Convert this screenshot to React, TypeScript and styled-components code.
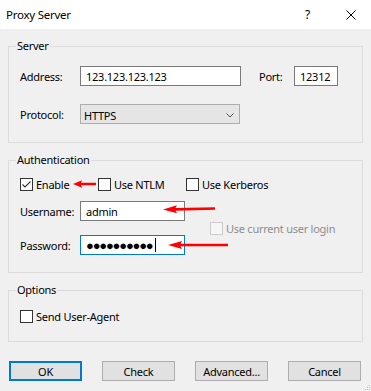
import React from 'react';
import styled, { createGlobalStyle } from 'styled-components';

const GlobalStyle = createGlobalStyle`
    html, body {
        margin: 0;
        padding: 0;
        background: #f0f0f0;
    }
    * {
        box-sizing: border-box;
    }
`

const Window = styled.div`
    position: relative;
    width: 371px;
    height: 391px;
    background: #f0f0f0;
    font-family: "Noto Sans", "Open Sans", sans-serif;
    font-size: 11px;
    letter-spacing: -0.25px;
    color: #000;
    overflow: hidden;
    display: flex;
    flex-direction: column;
`

const TitleBar = styled.div`
    height: 29px;
    background: #fff;
    display: flex;
    align-items: center;
    padding: 0 15px 0 6px;
`

const TitleText = styled.span`
    flex: 1;
    font-size: 11.5px;
`

const HelpGlyph = styled.span`
    font-size: 12px;
    margin-right: 36px;
`

const Body = styled.div`
    display: flex;
    flex-direction: column;
    gap: 9px;
    padding: 9px 8px 0 8px;
`

const Group = styled.fieldset<{ $pad: string }>`
    margin: 0;
    min-width: 0;
    border: 1px solid #dcdcdc;
    padding: ${p => p.$pad};
    display: flex;
    flex-direction: column;
`

const Legend = styled.legend`
    margin-left: -4px;
    padding: 0 1px;
    line-height: 16px;
`

const Row = styled.div<{ $gap?: number }>`
    position: relative;
    display: flex;
    align-items: center;
    margin-top: ${p => p.$gap ?? 0}px;
`

const Label = styled.span<{ $w: number }>`
    width: ${p => p.$w}px;
    flex-shrink: 0;
`

const TextBox = styled.div<{ $w: number; $focused?: boolean }>`
    width: ${p => p.$w}px;
    height: 20px;
    background: #fff;
    border: 1px solid ${p => (p.$focused ? '#0078d7' : '#7a7a7a')};
    display: flex;
    align-items: center;
    padding-left: 5px;
    white-space: nowrap;
`

const Combo = styled.div`
    width: 160px;
    height: 20px;
    background: #e5e5e5;
    border: 1px solid #adadad;
    display: flex;
    align-items: center;
    justify-content: space-between;
    padding: 2px 5px 0 3px;
`

const Dots = styled.span`
    font-size: 13px;
    letter-spacing: -1.2px;
    line-height: 1;
`

const Caret = styled.span`
    width: 1px;
    height: 14px;
    background: #000;
    margin-left: 2px;
`

const CheckGrid = styled.div`
    display: grid;
    grid-template-columns: 78px 88px auto;
    align-items: center;
    height: 16px;
`

const CheckItem = styled.span<{ $disabled?: boolean }>`
    display: flex;
    align-items: center;
    gap: 3px;
    color: ${p => (p.$disabled ? '#8d8d8d' : '#000')};
    white-space: nowrap;
`

const ArrowCell = styled.span`
    display: flex;
    align-items: center;
`

const Box = styled.span<{ $disabled?: boolean }>`
    width: 13px;
    height: 13px;
    flex-shrink: 0;
    border: 1px solid ${p => (p.$disabled ? '#cccccc' : '#333333')};
    background: ${p => (p.$disabled ? '#f6f6f6' : '#fff')};
    display: flex;
    align-items: center;
    justify-content: center;
`

const CurrentLoginRow = styled.div`
    height: 13px;
    display: flex;
    align-items: center;
    padding-left: 190px;
    margin-top: 1px;
`

const ArrowOverlay = styled.svg<{ $left: number; $top: number }>`
    position: absolute;
    left: ${p => p.$left}px;
    top: ${p => p.$top}px;
`

const ButtonRow = styled.div`
    display: flex;
    justify-content: space-between;
    padding: 0 2px 0 1px;
    margin-top: 10px;
`

const Button = styled.div<{ $primary?: boolean }>`
    width: 73px;
    height: 20px;
    background: #e1e1e1;
    border: ${p => (p.$primary ? '2px solid #0078d7' : '1px solid #adadad')};
    display: flex;
    align-items: center;
    justify-content: center;
`

const Grip = styled.svg`
    position: absolute;
    right: 0;
    bottom: 0;
`

const Check = ({ checked, disabled, label }: { checked?: boolean; disabled?: boolean; label: string }) => (
    <CheckItem $disabled={disabled}>
        <Box $disabled={disabled}>
            {checked && (
                <svg width="11" height="11" viewBox="0 0 11 11">
                    <path d="M1.5 5.5 L4 8 L9.5 2.5" fill="none" stroke="#333" strokeWidth="1.1" />
                </svg>
            )}
        </Box>
        {label}
    </CheckItem>
)

export default function App() {
    return (
        <>
            <GlobalStyle />
            <Window>
                <TitleBar>
                    <TitleText>Proxy Server</TitleText>
                    <HelpGlyph>?</HelpGlyph>
                    <svg width="10" height="10" viewBox="0 0 10 10">
                        <path d="M0.5 0.5 L9.5 9.5 M9.5 0.5 L0.5 9.5" stroke="#000" strokeWidth="1" />
                    </svg>
                </TitleBar>

                <Body>
                    <Group $pad="12px 10px 18px 11px">
                        <Legend>Server</Legend>
                        <Row>
                            <Label $w={60}>Address:</Label>
                            <TextBox $w={161}>123.123.123.123</TextBox>
                            <Label $w={35} style={{ marginLeft: 18 }}>Port:</Label>
                            <TextBox $w={44}>12312</TextBox>
                        </Row>
                        <Row $gap={18}>
                            <Label $w={60}>Protocol:</Label>
                            <Combo>
                                HTTPS
                                <svg width="8" height="5" viewBox="0 0 8 5">
                                    <path d="M0.5 0.5 L4 4 L7.5 0.5" fill="none" stroke="#555" strokeWidth="1" />
                                </svg>
                            </Combo>
                        </Row>
                    </Group>

                    <Group $pad="8px 10px 17px 11px">
                        <Legend>Authentication</Legend>
                        <CheckGrid>
                            <ArrowCell>
                                <Check checked label="Enable" />
                                <svg width="23" height="8" viewBox="0 0 23 8" style={{ marginLeft: 4 }}>
                                    <path d="M0 4 L9 0.3 L8 2.8 L23 2.8 L23 5.2 L8 5.2 L9 7.7 Z" fill="#ff0000" />
                                </svg>
                            </ArrowCell>
                            <Check label="Use NTLM" />
                            <Check label="Use Kerberos" />
                        </CheckGrid>
                        <Row $gap={9}>
                            <Label $w={60}>Username:</Label>
                            <TextBox $w={105}>admin</TextBox>
                            <ArrowOverlay $left={143} $top={3} width="52" height="10" viewBox="0 0 52 10">
                                <path d="M0 5.5 L14 1.2 L12.5 4 L52 3.3 L52 5.8 L12.5 6.8 L14 9.3 Z" fill="#ff0000" />
                            </ArrowOverlay>
                        </Row>
                        <CurrentLoginRow>
                            <Check disabled label="Use current user login" />
                        </CurrentLoginRow>
                        <Row>
                            <Label $w={60}>Password:</Label>
                            <TextBox $w={105} $focused>
                                <Dots>●●●●●●●●●●</Dots>
                                <Caret />
                            </TextBox>
                            <ArrowOverlay $left={148} $top={5} width="60" height="10" viewBox="0 0 60 10">
                                <path d="M0 5 L14 1 L12.5 3.8 L60 3.8 L60 6.2 L12.5 6.2 L14 9 Z" fill="#ff0000" />
                            </ArrowOverlay>
                        </Row>
                    </Group>

                    <Group $pad="10px 10px 17px 11px">
                        <Legend>Options</Legend>
                        <Row style={{ height: 16 }}>
                            <Check label="Send User-Agent" />
                        </Row>
                    </Group>

                    <ButtonRow>
                        <Button $primary>OK</Button>
                        <Button>Check</Button>
                        <Button>Advanced...</Button>
                        <Button>Cancel</Button>
                    </ButtonRow>
                </Body>

                <Grip width="8" height="8" viewBox="0 0 8 8">
                    <rect x="6" y="2" width="1" height="1" fill="#bdbdbd" />
                    <rect x="4" y="4" width="1" height="1" fill="#bdbdbd" />
                    <rect x="6" y="4" width="1" height="1" fill="#bdbdbd" />
                    <rect x="2" y="6" width="1" height="1" fill="#bdbdbd" />
                    <rect x="4" y="6" width="1" height="1" fill="#bdbdbd" />
                    <rect x="6" y="6" width="1" height="1" fill="#bdbdbd" />
                </Grip>
            </Window>
        </>
    );
}
